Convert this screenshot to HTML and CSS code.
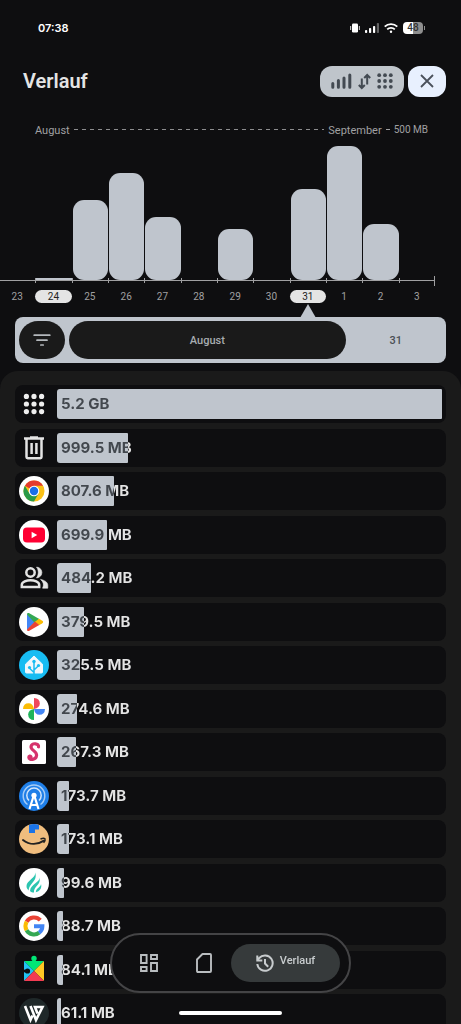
FILE: index.html
```html
<!DOCTYPE html>
<html lang="de">
<head>
    <meta charset="UTF-8">
    <meta name="viewport" content="width=device-width, initial-scale=1.0">
    <title>Verlauf</title>
    <link rel="stylesheet" href="styles.css">
</head>
<body>
    <!-- Statusleiste -->
    <div class="statusbar">
        <span class="clock">07:38</span>
        <div class="status-icons">
            <svg width="10" height="10" viewBox="0 0 10 10" fill="#fff"><rect x="2" y="0.5" width="6" height="9" rx="1.2"/><rect x="0" y="3" width="1.2" height="4" opacity=".7"/><rect x="8.8" y="3" width="1.2" height="4" opacity=".7"/></svg>
            <svg width="14" height="10" viewBox="0 0 14 10" fill="#fff"><rect x="0" y="7" width="2.2" height="3" rx=".8"/><rect x="4" y="5" width="2.2" height="5" rx=".8"/><rect x="8" y="3" width="2.2" height="7" rx=".8"/><rect x="11.8" y="0" width="2.2" height="10" rx=".8" opacity=".35"/></svg>
            <svg width="14" height="10" viewBox="0 0 14 10" fill="none" stroke="#fff" stroke-width="1.8"><path d="M.7 3.6a9 9 0 0 1 12.6 0"/><path d="M3.2 6.4a5.4 5.4 0 0 1 7.6 0"/><circle cx="7" cy="8.8" r="1.2" fill="#fff" stroke="none"/></svg>
            <span class="battery">48</span>
        </div>
    </div>

    <header class="header">
        <h1>Verlauf</h1>
        <button class="tools" aria-label="Ansicht">
            <svg width="21" height="16" viewBox="0 0 21 16" stroke="#434a52" stroke-width="3" stroke-linecap="round"><path d="M1.8 10.4v3.8M7.4 7.6v6.6M13 5v9.2M18.800 2v12.2"/></svg>
            <svg width="13" height="17" viewBox="0 0 13 17" fill="none" stroke="#434a52" stroke-width="2"><path d="M3.8 5.500V15M.8 12l3 3 3-3M9.200 11.500V2M6.200 5l3-3 3 3"/></svg>
            <svg width="16" height="16" viewBox="0 0 16 16" fill="#434a52"><circle cx="2.2" cy="2.2" r="1.9"/><circle cx="8" cy="2.2" r="1.9"/><circle cx="13.8" cy="2.2" r="1.9"/><circle cx="2.2" cy="8" r="1.9"/><circle cx="8" cy="8" r="1.9"/><circle cx="13.8" cy="8" r="1.9"/><circle cx="2.2" cy="13.8" r="1.9"/><circle cx="8" cy="13.8" r="1.9"/><circle cx="13.8" cy="13.8" r="1.9"/></svg>
        </button>
        <button class="close" aria-label="Schließen">
            <svg width="14" height="14" viewBox="0 0 14 14" stroke="#4b515c" stroke-width="1.8"><path d="M1 1l12 12M13 1L1 13"/></svg>
        </button>
    </header>

    <!-- Diagramm -->
    <section class="chart">
        <div class="scale">
            <span class="month">August</span>
            <span class="dashes"></span>
            <span class="month">September</span>
            <span class="dash"></span>
            <span class="limit">500 MB</span>
        </div>
        <div class="bars">
            <div class="day"></div>
            <div class="day"><div class="bar flat" style="height: 1.5%"></div></div>
            <div class="day"><div class="bar" style="height: 53%"></div></div>
            <div class="day"><div class="bar" style="height: 71%"></div></div>
            <div class="day"><div class="bar" style="height: 42%"></div></div>
            <div class="day"></div>
            <div class="day"><div class="bar" style="height: 34%"></div></div>
            <div class="day"></div>
            <div class="day"><div class="bar" style="height: 60%"></div></div>
            <div class="day"><div class="bar" style="height: 89%"></div></div>
            <div class="day"><div class="bar" style="height: 37%"></div></div>
            <div class="day"></div>
        </div>
        <div class="labels">
            <span>23</span>
            <span class="marked">24</span>
            <span>25</span>
            <span>26</span>
            <span>27</span>
            <span>28</span>
            <span>29</span>
            <span>30</span>
            <span class="marked current">31</span>
            <span>1</span>
            <span>2</span>
            <span>3</span>
        </div>
    </section>

    <div class="picker">
        <button class="filter" aria-label="Filter">
            <svg width="18" height="12" viewBox="0 0 18 12" stroke="#b4b8bc" stroke-width="1.7" stroke-linecap="round"><path d="M1.2 1.2h15.6M4 6.2h10M7.8 11h2.4"/></svg>
        </button>
        <button class="pick-month">August</button>
        <button class="pick-day">31</button>
    </div>

    <!-- Liste der Apps -->
    <main class="panel">
        <ul class="apps">
            <li class="app">
                <svg class="icon" viewBox="0 0 30 30" fill="#eee"><circle cx="7.4" cy="7.4" r="2.6"/><circle cx="15" cy="7.4" r="2.6"/><circle cx="22.6" cy="7.4" r="2.6"/><circle cx="7.4" cy="15" r="2.6"/><circle cx="15" cy="15" r="2.6"/><circle cx="22.6" cy="15" r="2.6"/><circle cx="7.4" cy="22.6" r="2.6"/><circle cx="15" cy="22.6" r="2.6"/><circle cx="22.6" cy="22.6" r="2.6"/></svg>
                <div class="usage" style="--used: 100%"><span>5.2 GB</span></div>
            </li>
            <li class="app">
                <svg class="icon" viewBox="0 0 30 30" fill="none" stroke="#e4e4e4" stroke-width="2.5"><path d="M5 5.6h20M11 4.4h8M7.5 5.6v18.4q0 1.2 1.200 1.200h12.600q1.200 0 1.200-1.200V5.600"/><path d="M12.600 10v11M17.400 10v11"/></svg>
                <div class="usage" style="--used: 18.5%"><span>999.5 MB</span></div>
            </li>
            <li class="app">
                <svg class="icon" viewBox="0 0 30 30"><circle cx="15" cy="15" r="15" fill="#fff"/><circle cx="15" cy="15" r="10.5" fill="#fbc116"/><path d="M15 15L5.9 9.75A10.5 10.5 0 0 1 24.1 9.75H15z" fill="#e33b2e"/><path d="M5.9 9.75A10.5 10.5 0 0 0 15 25.5L19.55 17.6 15 15l-4.55 2.6z" fill="#2a9a48"/><circle cx="15" cy="15" r="5.3" fill="#fff"/><circle cx="15" cy="15" r="4.2" fill="#1a6fe8"/></svg>
                <div class="usage" style="--used: 14.9%"><span>807.6 MB</span></div>
            </li>
            <li class="app">
                <svg class="icon" viewBox="0 0 30 30"><circle cx="15" cy="15" r="15" fill="#fff"/><rect x="4" y="7.5" width="22" height="15" rx="4" fill="#ff0033"/><path d="M12.6 11.7v6.6l5.6-3.3z" fill="#fff"/></svg>
                <div class="usage" style="--used: 12.9%"><span>699.9 MB</span></div>
            </li>
            <li class="app">
                <svg class="icon" viewBox="0 0 30 30" fill="none" stroke="#e4e4e4" stroke-width="2.5"><circle cx="11.5" cy="9.5" r="4.2"/><path d="M2.8 24v-2.2c0-3 5-4.6 8.7-4.6s8.7 1.6 8.7 4.6V24z"/><path d="M17.5 4.1a5.4 5.4 0 0 1 0 10.8c2.4-3 2.4-7.8 0-10.800zM21.500 16.400c4 .8 7.300 2.800 7.300 5.800v3h-5.200c1.600-3.400.8-6.400-2.100-8.800z" fill="#e4e4e4" stroke="#e4e4e4" stroke-width=".6"/></svg>
                <div class="usage" style="--used: 8.9%"><span>484.2 MB</span></div>
            </li>
            <li class="app">
                <svg class="icon" viewBox="0 0 30 30"><circle cx="15" cy="15" r="15" fill="#fff"/><path d="M8 7v16l8.5-8z" fill="#4285f4"/><path d="M8 7.5C8 6 9.3 5.7 10.3 6.3l10 5.7-4.3 4.2z" fill="#34a853"/><path d="M20 11.8l3.3 1.9c1.1.7 1.1 1.9 0 2.6L20 18.2 15.6 15z" fill="#fbbc04"/><path d="M8 22.500c0 1.500 1.300 1.800 2.300 1.200l10-5.700-4.400-3.400z" fill="#ea4335"/></svg>
                <div class="usage" style="--used: 7%"><span>379.5 MB</span></div>
            </li>
            <li class="app">
                <svg class="icon" viewBox="0 0 30 30"><circle cx="15" cy="15" r="15" fill="#18bcf2"/><path d="M15 6l8.500 8.200V22q0 1-1 1h-15Q6.500 23 6.500 22v-7.800z" fill="#f2f7fb" stroke="#f2f7fb" stroke-linejoin="round"/><path d="M15 24V12M15 22.500l-4.500-4.300M15 20l4.500-4.300" fill="none" stroke="#18bcf2" stroke-width="1.500"/><circle cx="15" cy="11.500" r="1.700" fill="#18bcf2"/><circle cx="10.500" cy="17.500" r="1.600" fill="#18bcf2"/><circle cx="19.500" cy="15.500" r="1.600" fill="#18bcf2"/></svg>
                <div class="usage" style="--used: 6%"><span>325.5 MB</span></div>
            </li>
            <li class="app">
                <svg class="icon" viewBox="0 0 30 30"><circle cx="15" cy="15" r="15" fill="#fff"/><path d="M15 4q5.800.2 5.800 5.600Q20.800 14 15 15z" fill="#f0475c"/><path d="M26 15q-.2 5.800-5.600 5.800Q16 20.800 15 15z" fill="#4285f4"/><path d="M15 26q-5.800-.2-5.800-5.600Q9.200 16 15 15z" fill="#1fb45a"/><path d="M4 15q.2-5.800 5.600-5.800Q14 9.200 15 15z" fill="#fbbc04"/></svg>
                <div class="usage" style="--used: 5.1%"><span>274.6 MB</span></div>
            </li>
            <li class="app">
                <svg class="icon" viewBox="0 0 30 30"><rect x="3" y="3" width="24" height="24" rx="1.5" fill="#fff"/><path d="M19.500 9.800c.8-3.500-6.300-4.300-7.400-.6-1.100 3.900 5.900 4.800 5.500 9.200-.5 4.600-7.600 5.400-7.800 1.800 0-1.300 1.700-1.700 2.200-.4" fill="none" stroke="#d6336c" stroke-width="3.200" stroke-linecap="round"/></svg>
                <div class="usage" style="--used: 4.9%"><span>267.3 MB</span></div>
            </li>
            <li class="app">
                <svg class="icon" viewBox="0 0 30 30" fill="none"><circle cx="15" cy="15" r="15" fill="#1f7fe8"/><g stroke="#fff" stroke-width="1.5"><path d="M8.5 23.5a10.8 10.8 0 1 1 13 0" opacity=".6"/><path d="M10 19.500a7.200 7.200 0 1 1 10 0" opacity=".8"/><path d="M10.500 28L14.600 15h.8l4.100 13M12 24h6" stroke-width="2.200"/></g><circle cx="15" cy="14.300" r="2.600" fill="#fff"/></svg>
                <div class="usage" style="--used: 3.1%"><span>173.7 MB</span></div>
            </li>
            <li class="app">
                <svg class="icon" viewBox="0 0 30 30"><circle cx="15" cy="15" r="15" fill="#f0bd7e"/><path d="M10 1q5-1.800 10 0v4.500h-4V9h-6z" fill="#1a73e8"/><path d="M4 16c6.500 5 14.500 5 21 .7" fill="none" stroke="#222" stroke-width="2" stroke-linecap="round"/><path d="M21.500 15c2-.8 3.800-.8 4.500-.3.400 1-.2 2.800-1.400 4.200" fill="none" stroke="#222" stroke-width="1.400"/></svg>
                <div class="usage" style="--used: 3.1%"><span>173.1 MB</span></div>
            </li>
            <li class="app">
                <svg class="icon" viewBox="0 0 30 30"><circle cx="15" cy="15" r="15" fill="#fff"/><path d="M16 4.500c1.500 5-8.500 8-8.500 13.500 0 2 .8 3.300 2.300 4.500C9.500 16 19.500 12.500 16 4.500z" fill="#2cc5b0"/><path d="M20.500 9.500c.5 5-9 6.500-9.500 13.500 1 1 2.500 1.500 4 1.500-1-6 7.500-7.500 5.500-15z" fill="#2cc5b0"/><path d="M22 16c0 3-5 4-5.200 8.200 3.800-.7 6.500-4.200 5.200-8.200z" fill="#2cc5b0"/></svg>
                <div class="usage" style="--used: 1.8%"><span>99.6 MB</span></div>
            </li>
            <li class="app">
                <svg class="icon" viewBox="0 0 30 30" fill="none" stroke-width="4"><circle cx="15" cy="15" r="15" fill="#fff"/><path d="M21.3 9.2A8.5 8.5 0 0 0 7.6 10.8" stroke="#ea4335"/><path d="M7.6 10.8a8.5 8.5 0 0 0 0 8.4" stroke="#fbbc04"/><path d="M7.6 19.2a8.5 8.5 0 0 0 12.6 2.5" stroke="#34a853"/><path d="M20.2 21.7a8.5 8.5 0 0 0 3.2-6.500H15" stroke="#4285f4"/></svg>
                <div class="usage" style="--used: 1.6%"><span>88.7 MB</span></div>
            </li>
            <li class="app">
                <svg class="icon" viewBox="0 0 30 30"><path d="M5 6h20L15 16z" fill="#00e676"/><path d="M5 6l10 10L5 26z" fill="#22c3f3"/><path d="M25 6v20L15 16z" fill="#ffc824"/><path d="M5 26l10-10 10 10z" fill="#f43b52"/><circle cx="15" cy="3.5" r="2.700" fill="#00e676"/><path d="M13.500 4h3v3h-3z" fill="#00e676"/><circle cx="8.500" cy="16" r="2.600" fill="#0e0e10"/><path d="M4 14.700h4v2.600H4z" fill="#0e0e10"/></svg>
                <div class="usage" style="--used: 1.5%"><span>84.1 MB</span></div>
            </li>
            <li class="app">
                <svg class="icon" viewBox="0 0 30 30" fill="none" stroke="#fff" stroke-width="2.6"><circle cx="15" cy="15" r="15" fill="#1f2829" stroke="none"/><path d="M6 8l5.500 14 2-4.500M11.500 8L17 22l6.500-13H16l2.500 6.500"/></svg>
                <div class="usage" style="--used: 1.1%"><span>61.1 MB</span></div>
            </li>
        </ul>
    </main>

    <!-- Navigation -->
    <div class="bottom">
        <nav class="nav">
            <a href="#" aria-label="Übersicht">
                <svg width="18" height="18" viewBox="0 0 18 18" fill="none" stroke="#b9bdc0" stroke-width="1.9"><path d="M1 1h5.6v8H1zM11 1h6v4h-6zM11 9h6v8h-6zM1 13h5.6v4H1z"/></svg>
            </a>
            <a href="#" aria-label="SIM-Karte">
                <svg width="16" height="20" viewBox="0 0 16 20" fill="none" stroke="#b9bdc0" stroke-width="1.9" stroke-linejoin="round"><path d="M6.5 1H14q1 0 1 1v16q0 1-1 1H2q-1 0-1-1V6.5z"/></svg>
            </a>
            <a href="#" class="active">
                <svg width="18" height="18" viewBox="0 0 18 18" fill="none" stroke="#c8ccce" stroke-width="2"><path d="M1.3 10A7.7 7.7 0 1 0 3.2 4L1.500 6"/><path d="M1.300 1.500v5h5M9 5v4.500l3.200 3.200"/></svg>
                <span>Verlauf</span>
            </a>
        </nav>
        <div class="handle"></div>
    </div>
</body>
</html>
```
FILE: styles.css
```css
* {
    box-sizing: border-box;
}
body {
    font-family: Roboto, sans-serif;
    margin: 0;
    height: 100vh;
    overflow: hidden;
    display: flex;
    flex-direction: column;
    background-color: #0e0e10;
    color: #e4e4e4;
}
button {
    border: none;
    padding: 0;
    font-family: inherit;
    cursor: pointer;
    display: flex;
    align-items: center;
    justify-content: center;
}
svg {
    display: block;
    flex: none;
}

/* Statusleiste */
.statusbar {
    display: flex;
    justify-content: space-between;
    align-items: center;
    height: 56px;
    padding: 0 38px;
}
.clock {
    font-family: Inter, sans-serif;
    font-size: 11px;
    font-weight: 600;
    color: #fff;
}
.status-icons {
    display: flex;
    align-items: center;
    gap: 5px;
}
.battery {
    position: relative;
    width: 20px;
    height: 12px;
    border-radius: 4px;
    background: linear-gradient(90deg, #fff 50%, #8e8e8e 50%);
    color: #333;
    font-size: 10px;
    font-weight: 500;
    line-height: 12px;
    text-align: center;
}
.battery::after {
    content: "";
    position: absolute;
    top: 4px;
    right: -2px;
    width: 1px;
    height: 4px;
    background-color: #8e8e8e;
}

/* Kopfzeile */
.header {
    display: flex;
    align-items: center;
    gap: 4px;
    height: 50px;
    padding: 0 15px 0 23px;
}
h1 {
    flex: 1;
    margin: 0;
    font-size: 20px;
    font-weight: 600;
}
.tools {
    width: 84px;
    height: 31px;
    gap: 6px;
    border-radius: 12px;
    background-color: #bfc5cb;
}
.close {
    width: 38px;
    height: 31px;
    border-radius: 12px;
    background-color: #e8f0fe;
}

/* Diagramm */
.chart {
    margin: 15px 26px 0 -1px;
    color: #a0a0a2;
}
.scale {
    display: flex;
    align-items: center;
    height: 16px;
    margin-bottom: -8px;
    padding: 0 7px 0 36px;
    gap: 4px;
}
.month {
    font-size: 11px;
    padding-top: 2px;
}
.limit {
    font-size: 10px;
}
.dashes {
    flex: 1;
    height: 1px;
    background: repeating-linear-gradient(90deg, #8c8c8e 0 4px, transparent 4px 8px);
}
.dash {
    width: 4px;
    height: 1px;
    background-color: #a0a0a2;
}
.bars,
.labels {
    display: grid;
    grid-template-columns: repeat(12, 1fr);
}
.bars {
    position: relative;
    height: 152px;
    border-bottom: 1px solid #a0a0a2;
}
.bars::after {
    content: "";
    position: absolute;
    right: 0;
    bottom: -6px;
    width: 1px;
    height: 10px;
    background-color: #a0a0a2;
}
.day {
    position: relative;
    display: flex;
    align-items: flex-end;
    padding-left: 1px;
}
.day + .day::before {
    content: "";
    position: absolute;
    left: 0;
    bottom: -3px;
    width: 1px;
    height: 5px;
    background-color: #a0a0a2;
}
.bar {
    width: 100%;
    border-radius: 11px;
    background-color: #bfc5cd;
}
.flat {
    border-radius: 0;
}
.labels {
    margin-top: 9px;
    font-size: 10px;
    line-height: 13px;
    text-align: center;
}
.marked {
    border-radius: 7px;
    background-color: #e4e4e4;
    color: #222;
}
.current {
    position: relative;
}
.current::after {
    content: "";
    position: absolute;
    top: 14px;
    left: 50%;
    margin-left: -8px;
    border: 8px solid transparent;
    border-top: none;
    border-bottom: 14px solid #bfc5cd;
}

/* Auswahl */
.picker {
    display: flex;
    gap: 4px;
    margin: 14px 15px 8px;
    padding: 4px;
    border-radius: 8px;
    background-color: #bfc5cd;
}
.picker button {
    height: 38px;
    border-radius: 19px;
    font-size: 11px;
    font-weight: 500;
}
.filter {
    width: 46px;
    background-color: #1a1a1a;
}
.pick-month {
    flex: 3;
    background-color: #1a1a1a;
    color: #a8acb0;
}
.pick-day {
    flex: 1;
    background-color: transparent;
    color: #4b4f55;
}

/* Liste der Apps */
.panel {
    flex: 1;
    min-height: 0;
    overflow: hidden;
    padding: 14px 15px 0;
    border-radius: 18px 18px 0 0;
    background-color: #1a1a1a;
}
.apps {
    list-style: none;
    margin: 0;
    padding: 0;
}
.app {
    display: flex;
    align-items: center;
    gap: 8px;
    margin-bottom: 6px;
    padding: 4px;
    border-radius: 8px;
    background-color: #0e0e10;
}
.app:nth-child(even) {
    margin-bottom: 5px;
}
.icon {
    width: 30px;
    height: 30px;
}
.usage {
    position: relative;
    flex: 1;
}
.usage::before {
    content: "";
    position: absolute;
    top: 0;
    left: 0;
    width: var(--used);
    height: 100%;
    border-radius: 3px 1px 1px 3px;
    background-color: #bfc5cd;
}
/* Text wird über dem Balken dunkel */
.usage span {
    position: relative;
    display: block;
    padding-left: 4px;
    font-family: Inter, sans-serif;
    font-size: 15px;
    font-weight: 700;
    line-height: 30px;
    color: transparent;
    background: linear-gradient(90deg, #42474d var(--used), #e4e4e4 var(--used));
    -webkit-background-clip: text;
    background-clip: text;
}

/* Navigation */
.bottom {
    position: fixed;
    left: 0;
    right: 0;
    bottom: 9px;
    display: flex;
    flex-direction: column;
    align-items: center;
    gap: 18px;
}
.nav {
    display: flex;
    align-items: center;
    height: 60px;
    padding: 0 9px;
    border: 2px solid #444446;
    border-radius: 30px;
    background-color: #0e0e10;
}
.nav a {
    display: flex;
    align-items: center;
    justify-content: center;
    width: 55px;
    height: 38px;
    border-radius: 19px;
    color: #c8ccce;
    font-size: 11px;
    font-weight: 500;
    text-decoration: none;
}
.nav .active {
    width: 109px;
    gap: 6px;
    background-color: #363a3b;
}
.active span {
    padding-bottom: 6px;
}
.handle {
    width: 103px;
    height: 4px;
    border-radius: 2px;
    background-color: #fff;
}
```
